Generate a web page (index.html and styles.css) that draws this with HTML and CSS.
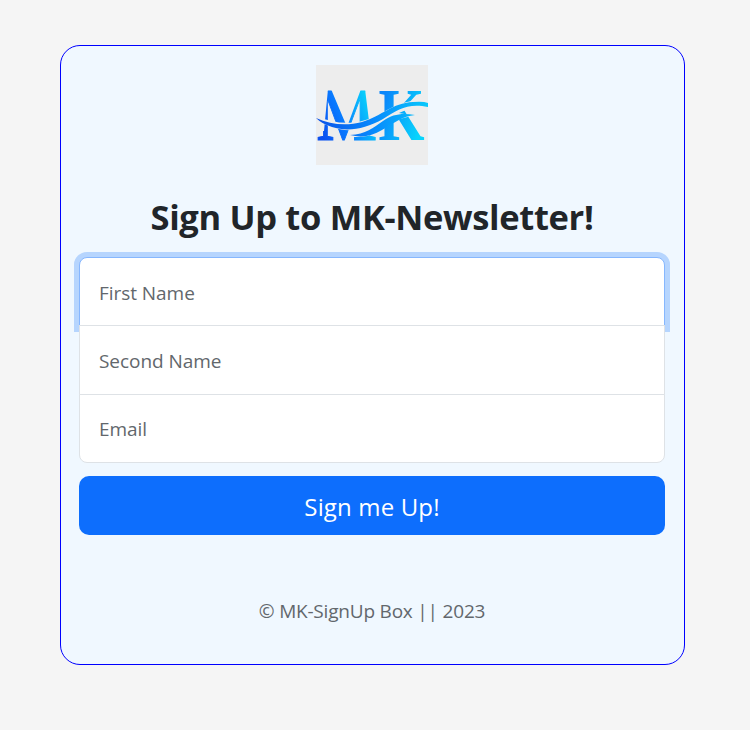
FILE: index.html
```html
<!DOCTYPE html>
<html lang="en">
<head>
<meta charset="utf-8">
<title>MK-Newsletter</title>
<link rel="stylesheet" href="styles.css">
</head>
<body>
<main class="card">
  <form class="form">
    <svg class="logo" viewBox="0 0 112 100" role="img">
      <defs>
        <linearGradient id="m" gradientUnits="userSpaceOnUse" x1="8" y1="0" x2="64" y2="-26">
          <stop offset="0" stop-color="#0a50f0"/><stop offset=".45" stop-color="#087aff"/><stop offset="1" stop-color="#08ccfb"/>
        </linearGradient>
        <linearGradient id="k" gradientUnits="userSpaceOnUse" x1="4" y1="-34" x2="54" y2="-14">
          <stop offset="0" stop-color="#0a86fa"/><stop offset="1" stop-color="#08d4fc"/>
        </linearGradient>
        <linearGradient id="s" gradientUnits="userSpaceOnUse" x1="0" y1="0" x2="112" y2="0">
          <stop offset="0" stop-color="#0a50e8"/><stop offset=".5" stop-color="#0888fc"/><stop offset="1" stop-color="#08c8fb"/>
        </linearGradient>
        <clipPath id="peaks"><path d="M12 24H15L31 62L45 24H49L54 64H64V80H0V66H8Z"/></clipPath>
      </defs>
      <rect width="112" height="100" fill="#ededed"/>
      <g clip-path="url(#peaks)">
        <text class="letter" transform="translate(1 74.5) scale(.86 1)" fill="url(#m)" stroke="url(#m)" stroke-width="1">M</text>
      </g>
      <text class="letter" transform="translate(62.5 74.5) scale(.8 1)" fill="url(#k)">K</text>
      <path d="M0 51C23 61 45 60 66 48C83 38 95 34 112 36V43C102 42 92 43 83 48L99 51C83 52 76 58 64 66C56 71 48 72 34 72V67L38 65C22 66 10 61 0 54Z" fill="#ededed"/>
      <path d="M0 53C15 60 31 61 46 57C66 51 76 38 97 37Q107 36 112 38V42C91 38 82 45 67 54C49 64 32 67 16 62Q6 59 0 53Z" fill="url(#s)"/>
      <path d="M34 70C50 69 57 63 67 56C77 49 86 48 99 50C87 51 78 58 66 65C56 71 46 73 34 70Z" fill="url(#s)"/>
    </svg>
    <h1 class="title">Sign Up to MK-Newsletter!</h1>
    <input class="field first" type="text" placeholder="First Name">
    <input class="field middle" type="text" placeholder="Second Name">
    <input class="field last" type="email" placeholder="Email">
    <button class="submit" type="button">Sign me Up!</button>
    <p class="copyright">© MK-SignUp Box || 2023</p>
  </form>
</main>
</body>
</html>
```
FILE: styles.css
```css
* { box-sizing: border-box; }
body {
  margin: 0;
  min-height: 730px;
  padding-top: 45px;
  background: #f5f5f5;
  font-family: "Open Sans", "Noto Sans", sans-serif;
  color: #212529;
}
.card {
  width: 625px;
  height: 620px;
  margin: 0 0 0 60px;
  padding: 19px 19px 0 18px;
  background: #f0f8ff;
  border: 1px solid #0000ff;
  border-radius: 20px;
}
.form { display: flex; flex-direction: column; }
.logo { width: 112px; height: 100px; align-self: center; display: block; }
.letter { font: bold 74px "Liberation Serif", serif; }
.title {
  margin: 30px 0 0;
  height: 44px;
  font-size: 34.5px;
  font-weight: 700;
  line-height: 44px;
  letter-spacing: -.33px;
  text-align: center;
  white-space: nowrap;
}
.field {
  width: 100%;
  height: 69px;
  margin: 0;
  padding: 1px 19px 0;
  border: 1px solid #dee2e6;
  background: #fff;
  font: 400 19px "Open Sans", sans-serif;
  letter-spacing: -.05px;
  outline: 0;
}
.field::placeholder { color: #62676c; opacity: 1; }
.first {
  margin-top: 18px;
  padding-top: 3px;
  border-color: #86b7fe;
  border-radius: 8px 8px 0 0;
  box-shadow: 0 0 0 5px #b6d5fe, 0 1px 0 5px #b6d5fe;
}
.middle { position: relative; height: 70px; margin-top: -1px; }
.last { position: relative; margin-top: -1px; border-radius: 0 0 8px 8px; }
.submit {
  height: 59px;
  margin: 13px 0 0;
  padding: 1px 0 0;
  border: 0;
  border-radius: 10px;
  background: #0d6efd;
  color: #fff;
  font: 400 24px "Open Sans", sans-serif;
  letter-spacing: .15px;
}
.copyright {
  margin: 62px 0 0;
  font-size: 19px;
  font-weight: 400;
  line-height: 29px;
  letter-spacing: -.2px;
  text-align: center;
  color: #62676c;
}
```
